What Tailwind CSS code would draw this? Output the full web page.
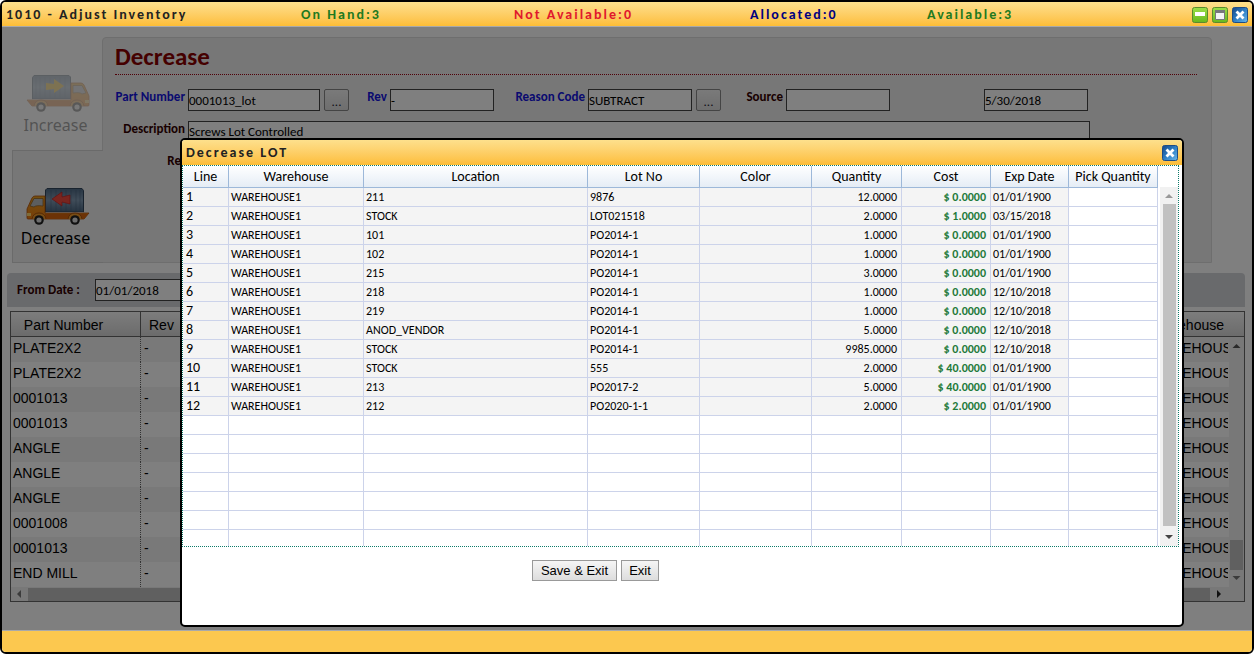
<!DOCTYPE html>
<html lang="en">
<head>
<meta charset="utf-8">
<title>1010 - Adjust Inventory</title>
<script src="https://cdn.jsdelivr.net/npm/@tailwindcss/browser@4"></script>
</head>
<body class="bg-white font-[Carlito,Lato,sans-serif] text-black">
<svg class="absolute size-0" aria-hidden="true">
  <defs>
    <linearGradient id="box" x1="0" y1="0" x2="0" y2="1"><stop offset="0" stop-color="#4f6a86"/><stop offset=".5" stop-color="#8099b2"/><stop offset="1" stop-color="#4a6580"/></linearGradient>
    <linearGradient id="cab" x1="0" y1="0" x2="0" y2="1"><stop offset="0" stop-color="#e8a020"/><stop offset="1" stop-color="#f07c10"/></linearGradient>
    <linearGradient id="blue" x1="0" y1="0" x2="1" y2="1"><stop offset="0" stop-color="#164788"/><stop offset=".5" stop-color="#2f7fc4"/><stop offset="1" stop-color="#6db9ea"/></linearGradient>
    <linearGradient id="green" x1="0" y1="0" x2="0" y2="1"><stop offset="0" stop-color="#9be04a"/><stop offset="1" stop-color="#66b81c"/></linearGradient>
    <symbol id="truck" viewBox="0 0 64 38">
      <path d="M21 1.500h35l1.500 2V25h-38V3z" fill="url(#box)" stroke="#33475c"/>
      <path d="M25 3v21M30 3v21M35 3v21M40 3v21M45 3v21M50 3v21M54 3v21" stroke="#3d5670" stroke-width=".6" opacity=".6"/>
      <path d="M20 25.500h37.500" stroke="#dfe6ee"/>
      <path d="M1 31V22l5-11q1-2 3-2h10v17h44l-5 6H2q-1 0-1-1z" fill="url(#cab)" stroke="#b3500a" stroke-width=".8"/>
      <path d="M4 19l4-7.500H17V19q-7-1-9 1z" fill="#b9bcbe" stroke="#8a5a20" stroke-width=".7"/>
      <path d="M19 27h43l-4 5H19z" fill="#d8640c"/>
      <path d="M1 26h4v3H1z" fill="#ffd873"/>
      <path d="M6 32q1-6 7-6t7 6M42 32q1-6 7-6t7 6" fill="#f09a2a" stroke="#9c4808" stroke-width=".8"/>
      <circle cx="13" cy="33" r="4.800" fill="#222"/><circle cx="13" cy="33" r="2.600" fill="#dcdcdc"/>
      <circle cx="49" cy="33" r="4.800" fill="#222"/><circle cx="49" cy="33" r="2.600" fill="#dcdcdc"/>
    </symbol>
    <symbol id="close" viewBox="0 0 16 16">
      <rect x=".5" y=".5" width="15" height="15" rx="2" fill="url(#blue)" stroke="#1d4d86"/>
      <path d="M5.500 5.500l5 5M10.500 5.500l-5 5" stroke="#fff" stroke-width="2.800" stroke-linecap="square"/>
    </symbol>
  </defs>
</svg>

<div class="relative flex h-screen flex-col">
 <div class="flex grow flex-col overflow-hidden rounded-md border-2 border-black">
  <header class="flex h-[25px] shrink-0 items-center border-b border-[#a9a9a9] bg-linear-to-b from-[#fde08c] to-[#fdbd35] px-1 pt-px text-sm font-bold tracking-[2px] text-[#222]">
    <h1 class="w-[295px]">1010 - Adjust Inventory</h1>
    <span class="w-[213px] text-[#1f7a1f]">On Hand:3</span>
    <span class="w-[236px] text-[#e0182d]">Not Available:0</span>
    <span class="w-[177px] text-[#000080]">Allocated:0</span>
    <span class="text-[#1f7a1f]">Available:3</span>
    <div class="ml-auto flex gap-1">
      <button class="size-4" aria-label="Minimize"><svg viewBox="0 0 16 16"><rect x=".5" y=".5" width="15" height="15" rx="2" fill="url(#green)" stroke="#5a8a2e"/><path d="M3 5h10v4H3z" fill="#fff"/></svg></button>
      <button class="size-4" aria-label="Maximize"><svg viewBox="0 0 16 16"><rect x=".5" y=".5" width="15" height="15" rx="2" fill="url(#green)" stroke="#5a8a2e"/><path d="M3.500 3.500h9v9h-9z" fill="#f4f4f4" stroke="#77777c"/><path d="M3 3h10v3H3z" fill="#77777c"/></svg></button>
      <button class="size-4" aria-label="Close"><svg class="size-4"><use href="#close"/></svg></button>
    </div>
  </header>

  <main class="relative grow overflow-hidden bg-white">
    <section class="mt-[10px] mr-10 ml-[10px] flex h-[226px]">
      <nav class="flex w-[90px] shrink-0 flex-col font-['Noto_Sans',sans-serif] text-base leading-[26px]">
        <a href="#increase" class="flex h-[113px] flex-col items-center pt-[37px] pr-[3px] opacity-35"><svg class="ml-1 h-[38px] w-16 shrink-0"><g transform="translate(64 0) scale(-1 1)"><use href="#truck" width="64" height="38"/></g><path d="M20 9l8 1V5l10 7-10 7v-4l-8 1z" fill="#f5b400"/></svg>Increase</a>
        <a href="#decrease" class="relative z-1 -mr-px flex h-[113px] flex-col items-center border border-r-0 border-[#d4d4d4] bg-[#eee] pt-9 pr-[5px]"><svg class="ml-1 h-[38px] w-16 shrink-0"><use href="#truck" width="64" height="38"/><path d="M44 8l-8 2V5l-10 7 10 7v-4l8 2z" fill="#f04a3e" stroke="#c81818" stroke-width=".6"/></svg>Decrease</a>
      </nav>
      <div class="grow rounded-t border border-[#dcdcdc] bg-[#eee] pr-[14px] pl-3">
        <h2 class="h-[37px] border-b border-dotted border-[#a00010] pt-1 text-[25px] leading-[30px] font-bold text-[#8b0000]">Decrease</h2>
        <form class="mt-[14px] flex flex-col gap-[10px] text-[13px] leading-4">
          <div class="flex h-[22px]">
            <label for="part" class="mr-[3px] w-[70px] text-right font-bold whitespace-nowrap text-[#1414e0]">Part Number</label>
            <input id="part" value="0001013_lot" class="w-[132px] border border-[#444] bg-white pt-[2px]">
            <button type="button" class="ml-1 w-[25px] rounded-xs border border-[#888] bg-linear-to-b from-[#f4f4f4] to-[#ddd] pt-1 text-[#223] leading-3">...</button>
            <label for="rev" class="mr-[3px] w-[38px] text-right font-bold text-[#1414e0]">Rev</label>
            <input id="rev" value="-" class="w-[104px] border border-[#444] bg-white pt-[2px]">
            <label for="reason" class="mr-[3px] w-[91px] text-right font-bold text-[#1414e0]">Reason Code</label>
            <input id="reason" value="SUBTRACT" class="w-[104px] border border-[#444] bg-white pt-[2px]">
            <button type="button" class="ml-1 w-[25px] rounded-xs border border-[#888] bg-linear-to-b from-[#f4f4f4] to-[#ddd] pt-1 text-[#223] leading-3">...</button>
            <label for="source" class="mr-[3px] w-[62px] text-right font-bold text-[#300]">Source</label>
            <input id="source" class="w-[104px] border border-[#444] bg-white pt-[2px]">
            <input aria-label="Date" value="5/30/2018" class="ml-[94px] w-[104px] border border-[#444] bg-white pt-[2px]">
          </div>
          <div class="flex h-[22px]">
            <label for="desc" class="mr-[3px] w-[70px] text-right font-bold text-[#300]">Description</label>
            <input id="desc" value="Screws Lot Controlled" class="w-[902px] border border-[#444] bg-white">
          </div>
          <div class="flex h-[22px]">
            <label for="ref" class="mr-[3px] w-[70px] text-right font-bold text-[#300]">Ref</label>
            <input id="ref" class="w-[902px] border border-[#444] bg-white">
          </div>
        </form>
      </div>
    </section>

    <div class="mt-[10px] mr-[7px] ml-[5px] flex h-[34px] items-center rounded-t bg-[#d2d5d9] pl-[10px] text-[13px]">
      <label for="from" class="w-[78px] pb-px font-bold whitespace-pre text-[#300]">From Date :</label>
      <input id="from" value="01/01/2018" class="h-[22px] w-[104px] border border-[#444] bg-white">
    </div>

    <div class="mt-1 mr-[7px] ml-2 border border-[#666] font-['Liberation_Sans',Arial,sans-serif] text-sm">
      <div class="relative">
        <table class="w-full table-fixed border-separate border-spacing-0 text-left">
          <colgroup><col class="w-[130px]"><col class="w-[80px]"><col><col class="w-[80px]"><col class="w-[16px]"></colgroup>
          <thead>
            <tr class="h-[25px] bg-linear-to-b from-[#fafafa] to-[#d6d6d6]">
              <th class="border-r border-b border-[#666] pt-px pr-6 text-center font-normal">Part Number</th>
              <th class="border-b border-[#666] pt-px pl-2 font-normal">Rev</th>
              <th class="border-b border-[#666]"></th>
              <th colspan="2" class="border-b border-[#666] pt-px pr-5 text-right font-normal">Warehouse</th>
            </tr>
          </thead>
          <tbody id="history"></tbody>
        </table>
        <div class="absolute top-[25px] right-0 bottom-0 flex w-[15px] flex-col items-center bg-[#f1f1f1]">
          <svg viewBox="0 0 15 17" class="h-[17px] shrink-0"><path d="M3.500 11h8l-4-4z" fill="#555"/></svg>
          <div class="mt-auto h-[30px] w-[13px] bg-[#c1c1c1]"></div>
          <svg viewBox="0 0 15 17" class="h-[17px] shrink-0"><path d="M3.500 6h8l-4 4z" fill="#777"/></svg>
        </div>
      </div>
      <div class="flex h-[14px] items-center bg-[#f1f1f1]">
        <svg viewBox="0 0 17 14" class="w-[17px]"><path d="M10 3v8L6 7z" fill="#777"/></svg>
        <div class="h-[13px] grow bg-[#c1c1c1]"></div>
        <svg viewBox="0 0 34 14" class="w-[34px]"><path d="M7 3v8l4-4z" fill="#222"/></svg>
      </div>
    </div>

    <div class="absolute inset-0 z-10 bg-black/50"></div>
  </main>
  <footer class="h-[22px] shrink-0 border-t border-[#a9a9a9] bg-[#fcc84f]"></footer>
 </div>

  <section role="dialog" aria-labelledby="lot-title" class="absolute top-[138px] right-[70px] left-[180px] z-20 h-[489px] overflow-hidden rounded-[5px] border-2 border-black bg-white">
    <header class="flex h-[25px] items-center justify-between bg-linear-to-b from-[#fde08c] to-[#fdbd35] px-1 text-sm font-bold tracking-[2px] text-[#222]">
      <h2 id="lot-title">Decrease LOT</h2>
      <button class="size-4" aria-label="Close dialog"><svg class="size-4"><use href="#close"/></svg></button>
    </header>
    <div class="mr-[3px] flex h-[382px] justify-between overflow-hidden border border-dotted border-[#0f7a6a]">
      <table class="mr-[2px] h-fit grow table-fixed border-separate border-spacing-0 text-xs leading-[18px]">
        <colgroup><col class="w-[46px]"><col class="w-[135px]"><col class="w-[224px]"><col class="w-[112px]"><col class="w-[112px]"><col class="w-[90px]"><col class="w-[89px]"><col class="w-[78px]"><col class="w-[89px]"></colgroup>
        <thead class="text-sm leading-5">
          <tr id="lot-head" class="h-[22px] bg-linear-to-b from-white to-[#e4ecf5]"></tr>
        </thead>
        <tbody id="lots"></tbody>
      </table>
      <div class="mt-[21px] flex w-[18px] flex-col items-center bg-[#f1f1f1]">
        <svg viewBox="0 0 17 17" class="size-[17px] shrink-0"><path d="M4 11h8L8 7z" fill="#999"/></svg>
        <div class="w-[13px] grow bg-[#c1c1c1]"></div>
        <svg viewBox="0 0 17 20" class="h-5 w-[17px] shrink-0"><path d="M4 9h8l-4 4z" fill="#444"/></svg>
      </div>
    </div>
    <div class="mt-[13px] flex gap-1 pl-[350px] font-['Liberation_Sans',Arial,sans-serif] text-[13px] leading-[18px]">
      <button class="h-[21px] w-[85px] border border-[#999] bg-linear-to-b from-[#f5f5f5] to-[#ddd] whitespace-nowrap">Save &amp; Exit</button>
      <button class="h-[21px] w-[38px] border border-[#999] bg-linear-to-b from-[#f5f5f5] to-[#ddd]">Exit</button>
    </div>
  </section>
</div>

<script>
const parts = ['PLATE2X2','PLATE2X2','0001013','0001013','ANGLE','ANGLE','ANGLE','0001008','0001013','END MILL'];
document.getElementById('history').innerHTML = parts.map(p =>
  `<tr class="h-[25px] leading-5 odd:bg-[#f3f3f3]"><td class="border-r border-dotted border-[#666] pb-1 pl-[2px]">${p}</td><td class="pb-1 pl-[3px]">-</td><td></td><td class="overflow-hidden pb-1 pl-[2px] whitespace-nowrap">WAREHOUSE1</td><td></td></tr>`).join('');

document.getElementById('lot-head').innerHTML = ['Line','Warehouse','Location','Lot No','Color','Quantity','Cost','Exp Date','Pick Quantity'].map(h =>
  `<th class="border-r border-b border-[#9db8d9] pt-px font-normal whitespace-nowrap">${h}</th>`).join('');

const lots = [
  ['211','9876','12.0000','0.0000','01/01/1900'],
  ['STOCK','LOT021518','2.0000','1.0000','03/15/2018'],
  ['101','PO2014-1','1.0000','0.0000','01/01/1900'],
  ['102','PO2014-1','1.0000','0.0000','01/01/1900'],
  ['215','PO2014-1','3.0000','0.0000','01/01/1900'],
  ['218','PO2014-1','1.0000','0.0000','12/10/2018'],
  ['219','PO2014-1','1.0000','0.0000','12/10/2018'],
  ['ANOD_VENDOR','PO2014-1','5.0000','0.0000','12/10/2018'],
  ['STOCK','PO2014-1','9985.0000','0.0000','12/10/2018'],
  ['STOCK','555','2.0000','40.0000','01/01/1900'],
  ['213','PO2017-2','5.0000','40.0000','01/01/1900'],
  ['212','PO2020-1-1','2.0000','2.0000','01/01/1900'],
];
let body = '';
for (let i = 0; i < 19; i++) {
  const r = lots[i];
  const cell = (text, cls) => `<td class="border-r border-b border-[#ccd3ea] ${r ? 'bg-[#f4f4f4]' : ''} ${cls}">${text}</td>`;
  body += '<tr class="h-[19px]">' + (r
    ? cell(i + 1, 'pl-[3px] text-sm leading-[18px]') + cell('WAREHOUSE1', 'pl-[2px]') + cell(r[0], 'pl-[2px]') + cell(r[1], 'pl-[2px]') + cell('', '')
      + cell(r[2], 'pr-1 text-right') + cell('$ ' + r[3], 'pr-1 text-right font-bold text-[#1f7a3a]') + cell(r[4], 'pl-[2px]')
      + '<td class="border-r border-b border-[#ccd3ea]"></td>'
    : cell('', '').repeat(9)) + '</tr>';
}
document.getElementById('lots').innerHTML = body;
</script>
</body>
</html>
